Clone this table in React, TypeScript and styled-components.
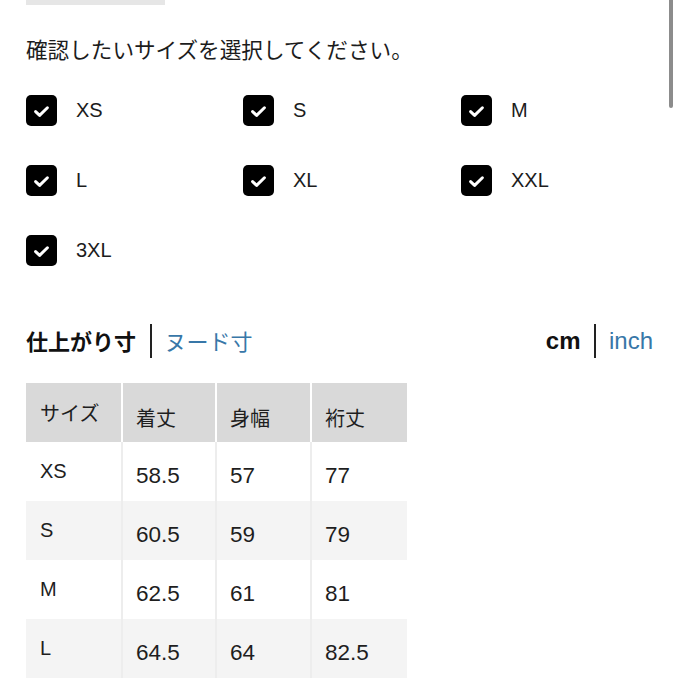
import React from "react";
import styled, { createGlobalStyle } from "styled-components";

const GlobalStyle = createGlobalStyle`
  html, body {
    margin: 0;
    padding: 0;
    background: #ffffff;
  }
  body {
    font-family: "Liberation Sans", "Noto Sans CJK JP", sans-serif;
    color: #1c1c1c;
  }
`;

const JP = `"Noto Sans CJK JP", "Liberation Sans", sans-serif`;
const LATIN = `"Liberation Sans", "Noto Sans CJK JP", sans-serif`;
const BLUE = "#3877a8";

const Page = styled.div`
  width: 680px;
  height: 680px;
  overflow: hidden;
  box-sizing: border-box;
  padding: 0 27px 0 26px;
  display: flex;
  flex-direction: column;
`;

const TopTab = styled.div`
  width: 139px;
  height: 5px;
  background: #e6e6e6;
  flex: none;
`;

const Scrollbar = styled.div`
  position: fixed;
  top: 0;
  left: 669px;
  width: 4px;
  height: 108px;
  border-radius: 0 0 2px 2px;
  background: #8c8c8c;
`;

const Prompt = styled.p`
  margin: 29px 0 0;
  font-family: ${JP};
  font-size: 21.6px;
  line-height: 29px;
  color: #1c1c1c;
`;

const SizeGrid = styled.div`
  margin-top: 32px;
  display: grid;
  grid-template-columns: 217px 218px 1fr;
  row-gap: 39px;
`;

const SizeOption = styled.label`
  display: flex;
  align-items: center;
  gap: 19px;
  height: 31px;
  cursor: pointer;
`;

const Box = styled.span`
  width: 31px;
  height: 31px;
  border-radius: 5px;
  background: #000;
  display: flex;
  align-items: center;
  justify-content: center;
  flex: none;
`;

const OptionLabel = styled.span`
  font-family: ${LATIN};
  font-size: 20px;
  color: #1c1c1c;
  line-height: 31px;
`;

const SectionBar = styled.div`
  margin-top: 57px;
  height: 35px;
  display: flex;
  align-items: center;
  justify-content: space-between;
`;

const Toggle = styled.div`
  display: flex;
  align-items: center;
`;

const ToggleItem = styled.span<{ $active?: boolean; $latin?: boolean }>`
  font-family: ${(p) => (p.$latin ? LATIN : JP)};
  font-size: ${(p) => (p.$latin ? "24px" : "22px")};
  font-weight: ${(p) => (p.$active ? 700 : 400)};
  color: ${(p) => (p.$active ? "#111" : BLUE)};
  line-height: 35px;
`;

const Divider = styled.span`
  width: 1.5px;
  height: 34px;
  background: #222;
  margin: 0 13px 0 14px;
`;

const Table = styled.div`
  margin-top: 25px;
  width: 381px;
  display: grid;
  grid-template-columns: 95px 94px 95px 97px;
  grid-auto-rows: 59px;
  box-shadow: inset 1px 0 0 #e2e2e2, inset -1px 0 0 #e6e6e6;
`;

const Cell = styled.div<{ $head?: boolean; $alt?: boolean; $first?: boolean }>`
  box-sizing: border-box;
  display: flex;
  align-items: center;
  padding-left: ${(p) => (p.$first ? "14px" : "13px")};
  padding-top: ${(p) => (p.$first ? "0" : p.$head ? "10px" : "8px")};
  background: ${(p) => (p.$head ? "#d9d9d9" : p.$alt ? "#f4f4f4" : "#ffffff")};
  border-left: ${(p) =>
    p.$first ? "none" : p.$head ? "2px solid #ffffff" : "2px solid #ededed"};
  font-family: ${(p) => (p.$head ? JP : LATIN)};
  font-size: ${(p) => (p.$head ? "20px" : p.$first ? "20px" : "22.5px")};
  color: #1e1e1e;
`;

const sizes = ["XS", "S", "M", "L", "XL", "XXL", "3XL"];

const rows: [string, string, string, string][] = [
  ["XS", "58.5", "57", "77"],
  ["S", "60.5", "59", "79"],
  ["M", "62.5", "61", "81"],
  ["L", "64.5", "64", "82.5"],
];

const headers = ["サイズ", "着丈", "身幅", "裄丈"];

const Check = () => (
  <svg width="31" height="31" viewBox="0 0 31 31" aria-hidden="true">
    <path
      d="M9.6 16.6 L13.6 20.4 L21.4 12.8"
      fill="none"
      stroke="#ffffff"
      strokeWidth="3"
      strokeLinecap="round"
      strokeLinejoin="round"
    />
  </svg>
);

export default function App() {
  return (
    <>
      <GlobalStyle />
      <Page>
        <TopTab />
        <Prompt>確認したいサイズを選択してください。</Prompt>
        <SizeGrid>
          {sizes.map((s) => (
            <SizeOption key={s}>
              <Box>
                <Check />
              </Box>
              <OptionLabel>{s}</OptionLabel>
            </SizeOption>
          ))}
        </SizeGrid>
        <SectionBar>
          <Toggle>
            <ToggleItem $active>仕上がり寸</ToggleItem>
            <Divider />
            <ToggleItem>ヌード寸</ToggleItem>
          </Toggle>
          <Toggle>
            <ToggleItem $active $latin>
              cm
            </ToggleItem>
            <Divider />
            <ToggleItem $latin>inch</ToggleItem>
          </Toggle>
        </SectionBar>
        <Table role="table">
          {headers.map((h, i) => (
            <Cell key={h} $head $first={i === 0} role="columnheader">
              {h}
            </Cell>
          ))}
          {rows.map((r, ri) =>
            r.map((v, ci) => (
              <Cell key={`${ri}-${ci}`} $alt={ri % 2 === 1} $first={ci === 0} role="cell">
                {v}
              </Cell>
            ))
          )}
        </Table>
      </Page>
      <Scrollbar />
    </>
  );
}
